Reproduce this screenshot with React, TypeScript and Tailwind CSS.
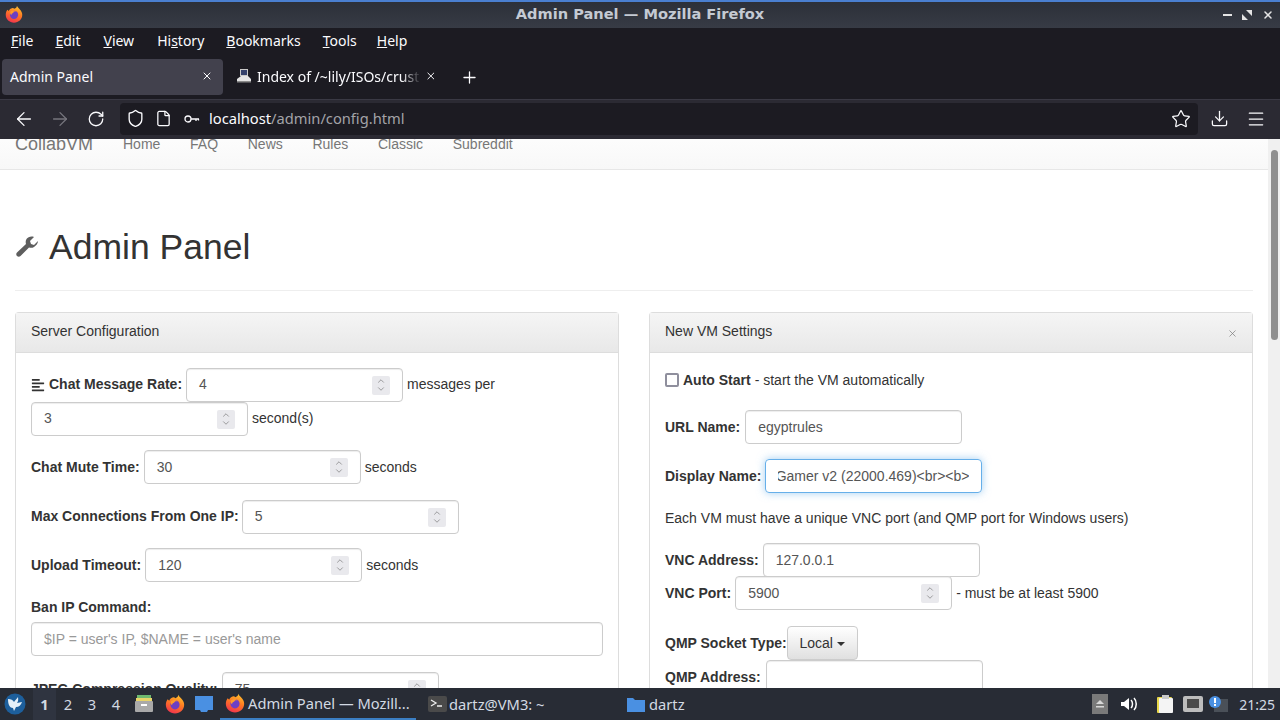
import { ReactNode } from 'react';
import { ArrowLeft, ArrowRight, ChevronDown, ChevronUp, Download, File, Menu, Plus, RotateCw, Shield, Star, X } from 'lucide-react';
import { FaAlignLeft } from 'react-icons/fa';

const Firefox = ({ size = 18 }: { size?: number }) => (
  <svg width={size} height={size} viewBox="0 0 24 24" className="shrink-0">
    <defs>
      <linearGradient id="ffx" x1="0.7" y1="0" x2="0.3" y2="1">
        <stop offset="0" stopColor="#ffc22e" />
        <stop offset="0.45" stopColor="#ff7a22" />
        <stop offset="1" stopColor="#f0314f" />
      </linearGradient>
    </defs>
    <path d="M16 1c.6 2 2 3 3.5 4.5C21.8 8 23 10 23 13c0 6-5 10.5-11 10.5S1 19 1 13c0-2.5.8-5 2.2-6.8L5 8c.8-2 2.5-3.5 5-4 1 0 2 .3 2.5 1C14.5 4.5 15.8 3 16 1z" fill="url(#ffx)" />
    <circle cx="12" cy="13" r="5.5" fill="#6d3fc4" />
    <path d="M7 9c2-2 6-2.500 8 0-2.500-.7-3.500 0-4 1.500-1.500.3-2.500 1.200-2.500 3C7 12.500 6.500 11 7 9z" fill="#ff9a2b" />
  </svg>
);

const Spinner = () => (
  <div className="flex h-[19px] w-[18px] flex-col items-center justify-center rounded-[2px] bg-[#e9e9ed] text-[#6b6b6b]">
    <ChevronUp size={10} strokeWidth={1.5} className="-mb-[1px]" />
    <ChevronDown size={10} strokeWidth={1.5} className="-mt-[1px]" />
  </div>
);

const Field = ({ value, spin = false }: { value: string; spin?: boolean }) => (
  <div className="flex h-[34px] w-[217px] shrink-0 items-center justify-between rounded-[4px] border border-[#ccc] bg-white px-[12px] text-[14px] text-[#555] shadow-[inset_0_1px_1px_rgba(0,0,0,0.075)]">
    <span>{value}</span>
    {spin && <Spinner />}
  </div>
);

const Label = ({ children }: { children: ReactNode }) => (
  <span className="whitespace-nowrap font-bold text-[#333]">{children}</span>
);

const Row = ({ className, children }: { className: string; children: ReactNode }) => (
  <div className={`flex items-center whitespace-nowrap ${className}`}>{children}</div>
);

const PanelHead = ({ title, close = false }: { title: string; close?: boolean }) => (
  <div className="flex h-[40px] items-center justify-between border-b border-[#ddd] bg-gradient-to-b from-[#f5f5f5] to-[#e8e8e8] pb-[4px] pl-[15px] pr-[14px] text-[#333]">
    <span>{title}</span>
    {close && <X size={11} strokeWidth={1.5} className="mt-[5px] text-[#777]" />}
  </div>
);

const Menubar = () => (
  <div className="flex h-[27px] items-center bg-[#1c1b22] pb-[2px] pl-[11px] text-[14px] text-[#fbfbfe]">
    <span><u>F</u>ile</span>
    <span className="ml-[22px]"><u>E</u>dit</span>
    <span className="ml-[23px]"><u>V</u>iew</span>
    <span className="ml-[23px]">Hi<u>s</u>tory</span>
    <span className="ml-[22px]"><u>B</u>ookmarks</span>
    <span className="ml-[22px]"><u>T</u>ools</span>
    <span className="ml-[20px]"><u>H</u>elp</span>
  </div>
);

const Tabs = () => (
  <div className="flex h-[44px] items-center bg-[#1c1b22] pl-[2px] text-[14px] text-[#fbfbfe]">
    <div className="flex h-[36px] w-[221px] items-center justify-between rounded-[4px] bg-[#42414d] pb-[2px] pl-[8px] pr-[10px]">
      <span>Admin Panel</span>
      <X size={12} />
    </div>
    <div className="flex h-[36px] w-[216px] items-center pb-[2px] pl-[13px] pr-[2px]">
      <svg width="16" height="16" viewBox="0 0 16 16" className="mr-[5px] shrink-0">
        <rect x="4" y="1" width="8" height="7" fill="#c9c9c9" />
        <rect x="5" y="2" width="6" height="5" fill="#34406a" />
        <path d="M1 11l4-3h7l3 3v3H1z" fill="#e4e4e4" />
        <path d="M1 13h14v1.5H1z" fill="#8a8a8a" />
      </svg>
      <span className="w-[169px] overflow-hidden whitespace-nowrap [mask-image:linear-gradient(to_right,black_88%,transparent)]">Index of /~lily/ISOs/crust</span>
      <X size={12} className="ml-[4px]" />
    </div>
    <Plus size={19} strokeWidth={1.6} className="ml-[21px]" />
  </div>
);

const Toolbar = () => (
  <div className="flex h-[40px] items-center border-t border-[#3a3944] bg-[#2b2a33] pb-[2px] text-[#fbfbfe]">
    <div className="flex w-[120px] items-center pl-[13px]">
      <ArrowLeft size={22} strokeWidth={1.4} />
      <ArrowRight size={22} strokeWidth={1.4} className="ml-[14px] text-[#77767e]" />
      <RotateCw size={18} strokeWidth={1.7} className="ml-[16px]" />
    </div>
    <div className="flex h-[32px] w-[1078px] items-center rounded-[4px] bg-[#1c1b22] pl-[6px] pr-[7px]">
      <Shield size={19} strokeWidth={1.7} />
      <File size={17} strokeWidth={1.8} className="ml-[10px]" />
      <svg width="16" height="16" viewBox="0 0 16 16" fill="none" stroke="currentColor" strokeWidth="1.3" className="ml-[12px]">
        <circle cx="4" cy="8" r="3" />
        <path d="M7 8h8M12 8v2M14.5 8v1.5" />
      </svg>
      <span className="ml-[9px] text-[14.7px]">localhost<span className="text-[#a3a3a8]">/admin/config.html</span></span>
      <Star size={20} strokeWidth={1.5} className="ml-auto" />
    </div>
    <Download size={19} strokeWidth={1.6} className="ml-[12px]" />
    <Menu size={20} strokeWidth={1.5} className="ml-[17px]" />
  </div>
);

const Nav = () => (
  <div className="-mt-[20px] flex h-[51px] shrink-0 items-center border-b border-[#e7e7e7] bg-gradient-to-b from-white to-[#f8f8f8] px-[15px] text-[#777]">
    <span className="w-[108px] text-[18px]">CollabVM</span>
    <div className="flex gap-[29.7px]">
      <span>Home</span>
      <span>FAQ</span>
      <span>News</span>
      <span>Rules</span>
      <span>Classic</span>
      <span>Subreddit</span>
    </div>
  </div>
);

const ServerPanel = () => (
  <div className="h-[500px] w-[604px] rounded-t-[4px] border border-b-0 border-[#ddd] bg-white">
    <PanelHead title="Server Configuration" />
    <div className="px-[15px] pt-[15px] text-[#333]">
      <Row className="[&_span]:-translate-y-[1px]">
        <FaAlignLeft size={14} className="mr-[4px] text-[#333]" />
        <Label>Chat Message Rate:</Label>
        <div className="ml-[4px]"><Field value="4" spin /></div>
        <span className="ml-[4px]">messages per</span>
      </Row>
      <Row className="[&_span]:-translate-y-[1px]">
        <Field value="3" spin />
        <span className="ml-[4px]">second(s)</span>
      </Row>
      <Row className="mt-[14px]">
        <Label>Chat Mute Time:</Label>
        <div className="ml-[4px]"><Field value="30" spin /></div>
        <span className="ml-[4px]">seconds</span>
      </Row>
      <Row className="mt-[16px] [&_span]:-translate-y-[1px]">
        <Label>Max Connections From One IP:</Label>
        <div className="ml-[3px]"><Field value="5" spin /></div>
      </Row>
      <Row className="mt-[14px]">
        <Label>Upload Timeout:</Label>
        <div className="ml-[4px]"><Field value="120" spin /></div>
        <span className="ml-[4px]">seconds</span>
      </Row>
      <div className="mt-[15px] h-[20px] font-bold">Ban IP Command:</div>
      <div className="mt-[5px] flex h-[34px] items-center rounded-[4px] border border-[#ccc] px-[12px] text-[#999] shadow-[inset_0_1px_1px_rgba(0,0,0,0.075)]">
        $IP = user's IP, $NAME = user's name
      </div>
      <Row className="mt-[16px]">
        <Label>JPEG Compression Quality:</Label>
        <div className="ml-[4px]"><Field value="75" spin /></div>
      </Row>
    </div>
  </div>
);

const VmPanel = () => (
  <div className="h-[500px] w-[604px] rounded-t-[4px] border border-b-0 border-[#ddd] bg-white">
    <PanelHead title="New VM Settings" close />
    <div className="px-[15px] pt-[17px] text-[#333]">
      <Row className="h-[20px]">
        <div className="mr-[4px] h-[14px] w-[14px] rounded-[2px] border-2 border-[#8f8f9d]" />
        <Label>Auto Start</Label>
        <span className="ml-[4px]">- start the VM automatically</span>
      </Row>
      <Row className="mt-[20px]">
        <Label>URL Name:</Label>
        <div className="ml-[5px]"><Field value="egyptrules" /></div>
      </Row>
      <Row className="mt-[15px]">
        <Label>Display Name:</Label>
        <div className="ml-[4px] flex h-[34px] w-[217px] items-center overflow-hidden rounded-[4px] border border-[#66afe9] px-[12px] text-[#555] shadow-[0_0_8px_rgba(102,175,233,0.6)]">
          <div className="w-[192px] overflow-hidden">
            <span className="float-right">Gamer v2 (22000.469)&lt;br&gt;&lt;b&gt;</span>
          </div>
        </div>
      </Row>
      <div className="mt-[15px] h-[20px]">Each VM must have a unique VNC port (and QMP port for Windows users)</div>
      <Row className="mt-[15px]">
        <Label>VNC Address:</Label>
        <div className="ml-[4px]"><Field value="127.0.0.1" /></div>
      </Row>
      <Row className="-mt-[1px]">
        <Label>VNC Port:</Label>
        <div className="ml-[4px]"><Field value="5900" spin /></div>
        <span className="ml-[4px]">- must be at least 5900</span>
      </Row>
      <Row className="mt-[16px]">
        <Label>QMP Socket Type:</Label>
        <div className="flex h-[34px] w-[71px] items-center justify-center gap-[4px] rounded-[4px] border border-[#ccc] bg-gradient-to-b from-white to-[#e0e0e0] text-[#333]">
          Local
          <span className="mt-[1px] h-0 w-0 border-x-[4px] border-t-[4px] border-x-transparent border-t-[#333]" />
        </div>
      </Row>
      <Row className="">
        <Label>QMP Address:</Label>
        <div className="ml-[5px]"><Field value="" /></div>
      </Row>
    </div>
  </div>
);

const Page = () => (
  <div className="flex min-h-0 flex-1 overflow-hidden bg-white font-['Liberation_Sans',sans-serif] text-[14px] leading-[20px]">
    <div className="flex min-w-0 flex-1 flex-col">
      <Nav />
      <div className="px-[15px]">
        <h1 className="mt-[55px] flex h-[44px] items-center pb-[1px] text-[35.5px] leading-[40px] text-[#333]">
          <svg width="24" height="24" viewBox="0 0 24 24" fill="#5e5e5e" className="mr-[10px] shrink-0">
            <path d="M23 6l-4 4-3-1-1-3 4-4c-3-1-6 0-7.500 2-1 1.500-1 3.500-.5 5L2 17.500c-1 1-1 2.500 0 3.500s2.500 1 3.500 0L14 12.500c1.500.5 3.500.5 5-.5 2-1.500 4-3.500 4-6z" />
          </svg>
          Admin Panel
        </h1>
        <hr className="mt-[21px] border-[#eee]" />
        <div className="mt-[21px] flex gap-[30px]">
          <ServerPanel />
          <VmPanel />
        </div>
      </div>
    </div>
    <div className="w-[12px] shrink-0 bg-[#f0f0f0] pl-[3px] pt-[11px]">
      <div className="h-[190px] w-[7px] rounded-[4px] bg-[#8f8f8f]" />
    </div>
  </div>
);

const Taskbar = () => (
  <div className="flex h-[32px] shrink-0 items-center bg-[#282c35] font-['Noto_Sans',sans-serif] text-[14.7px] text-[#d3dae3]">
    <svg width="22" height="22" viewBox="0 0 22 22" className="ml-[4px] shrink-0">
      <circle cx="11" cy="11" r="10.5" fill="#1d5f9c" />
      <path d="M4 6c3 0 5 1 6 3 1-2 3-3 4-5 .5 3 0 5-1 6 2 0 3-1 5-1-1 3-3 5-6 5l-2 4-1-3c-3 0-5-3-5-9z" fill="#e6f0f8" />
    </svg>
    <div className="ml-[7px] flex h-[32px] w-[23px] items-center justify-center bg-[#2f3440] font-bold">1</div>
    <span className="ml-[4px] w-[16px] text-center">2</span>
    <span className="ml-[8px] w-[16px] text-center">3</span>
    <span className="ml-[8px] w-[16px] text-center">4</span>
    <svg width="20" height="20" viewBox="0 0 20 20" className="ml-[10px] shrink-0">
      <rect x="3" y="1" width="14" height="3" fill="#6fb96f" />
      <rect x="2" y="4" width="16" height="3" fill="#e8d36a" />
      <rect x="1" y="7" width="18" height="11" rx="1" fill="#a9a9a9" />
      <rect x="7" y="10" width="6" height="2" fill="#fff" />
    </svg>
    <div className="ml-[11px]"><Firefox size={20} /></div>
    <svg width="20" height="18" viewBox="0 0 20 18" className="ml-[9px] shrink-0">
      <path d="M1 1h18v14h-5l-1 2H7l-1-2H1z" fill="#4a90e2" />
    </svg>
    <div className="ml-[6px] flex h-[32px] w-[196px] items-center border-b-2 border-[#3b7fc4] pl-[5px]">
      <Firefox size={20} />
      <span className="ml-[3px] whitespace-nowrap">Admin Panel — Mozill...</span>
    </div>
    <div className="ml-[12px] flex w-[198px] items-center">
      <svg width="19" height="18" viewBox="0 0 19 18" className="shrink-0">
        <rect x="0" y="1" width="19" height="16" rx="2" fill="#4a4a4a" />
        <path d="M3 5l5 3-5 3M9 11h5" stroke="#eee" strokeWidth="1.3" fill="none" />
      </svg>
      <span className="ml-[2px]">dartz@VM3: ~</span>
    </div>
    <svg width="20" height="18" viewBox="0 0 20 18" className="shrink-0">
      <path d="M1 3h6l2 2h10v12H1z" fill="#4a90e2" />
    </svg>
    <span className="ml-[3px]">dartz</span>
    <div className="ml-auto flex items-center pr-[5px]">
      <svg width="16" height="20" viewBox="0 0 16 20">
        <rect width="16" height="20" fill="#7a7a7a" />
        <path d="M4 10l4-4 4 4z M4 12h8v1.500H4z" fill="#d8d8d8" />
      </svg>
      <svg width="18" height="18" viewBox="0 0 18 18" className="ml-[12px]">
        <path d="M1 7h3l5-4v12l-5-4H1z" fill="#fff" />
        <path d="M11 5c2 2 2 6 0 8M14 3c3 3 3 9 0 12" stroke="#fff" strokeWidth="1.5" fill="none" />
      </svg>
      <svg width="20" height="20" viewBox="0 0 20 20" className="ml-[18px]">
        <rect x="1" y="3" width="15" height="16" rx="1" fill="#e8d84a" />
        <rect x="3" y="4" width="14" height="15" rx="1" fill="#f4f4f4" />
        <rect x="6" y="1" width="7" height="4" fill="#c9c9c9" />
      </svg>
      <svg width="20" height="18" viewBox="0 0 20 18" className="ml-[7px]">
        <rect x="0" y="1" width="20" height="16" rx="2" fill="#bdbdbd" />
        <rect x="4" y="4" width="12" height="9" fill="#4a4a4a" />
      </svg>
      <svg width="20" height="18" viewBox="0 0 20 18" className="ml-[5px]">
        <rect x="6" y="4" width="14" height="13" fill="#4a5058" />
        <circle cx="7" cy="7" r="6" fill="#4a90e2" />
        <rect x="6" y="3" width="2" height="5" fill="#fff" />
        <rect x="6" y="9" width="2" height="2" fill="#fff" />
      </svg>
      <span className="ml-[11px] text-[14px]">21:25</span>
    </div>
  </div>
);

export default function App() {
  return (
    <div className="flex h-[720px] w-[1280px] flex-col overflow-hidden bg-white">
      <div className="h-[2px] shrink-0 bg-[#4a7fd0]" />
      <div className="relative flex h-[26px] shrink-0 items-center justify-center bg-gradient-to-b from-[#2c3039] to-[#373b45] pb-[2px] font-['DejaVu_Sans',sans-serif] text-[14.6px] font-bold text-[#c4cad3]">
        <div className="absolute left-[5px] top-[3px]"><Firefox size={18} /></div>
        Admin Panel — Mozilla Firefox
        <div className="absolute right-[6px] top-[7px] flex items-center gap-[10px] text-[#e4e4e4]">
          <span className="h-[2px] w-[9px] bg-[#e4e4e4]" />
          <svg width="10" height="10" viewBox="0 0 10 10" fill="#e4e4e4">
            <path d="M4 0h6v6zM0 4l6 6H0z" />
          </svg>
          <X size={12} strokeWidth={3} />
        </div>
      </div>
      <div className="shrink-0 font-['Noto_Sans',sans-serif]">
        <Menubar />
        <Tabs />
        <Toolbar />
      </div>
      <Page />
      <Taskbar />
    </div>
  );
}
